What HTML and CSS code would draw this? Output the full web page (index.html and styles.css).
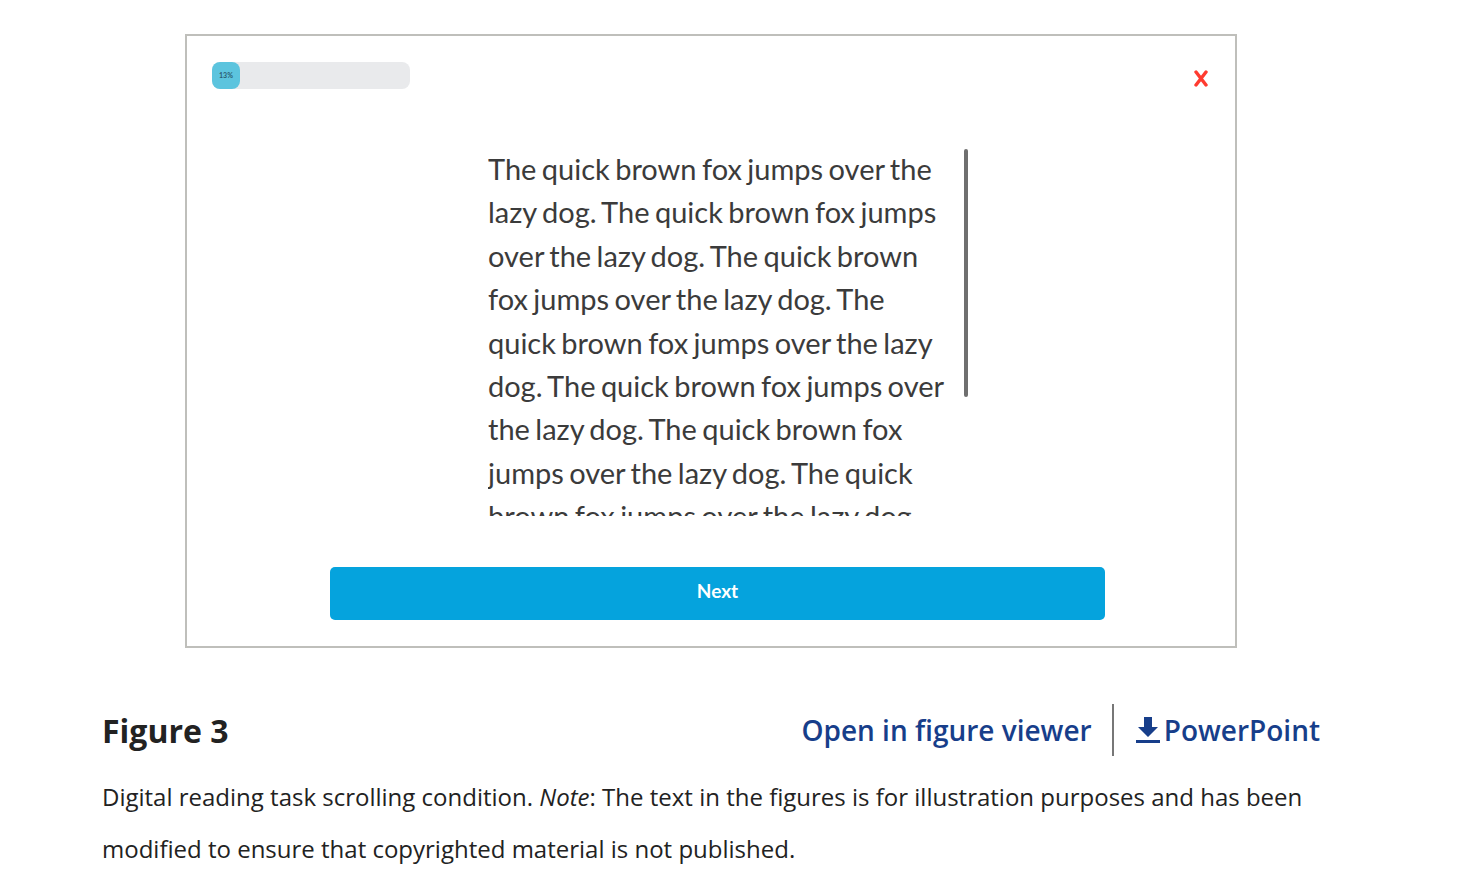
FILE: index.html
```html
<!DOCTYPE html>
<html lang="en">
  <head>
    <meta charset="UTF-8" />
    <meta name="viewport" content="width=device-width, initial-scale=1.0" />
    <link rel="stylesheet" href="styles.css">
    <title>Figure 3</title>
  </head>
  <body>
    <div class="figure-frame">
      <div class="task-header">
        <div class="progress">
          <div class="progress-fill">13%</div>
        </div>
        <svg class="close-icon" width="14" height="17" viewBox="0 0 14 17">
          <line x1="2" y1="2" x2="12" y2="15" />
          <line x1="12" y1="2" x2="2" y2="15" />
        </svg>
      </div>
      <div class="reading-area">
        <div class="reading-text">
          The quick brown fox jumps over the lazy dog. The quick brown fox jumps
          over the lazy dog. The quick brown fox jumps over the lazy dog. The
          quick brown fox jumps over the lazy dog. The quick brown fox jumps over
          the lazy dog. The quick brown fox jumps over the lazy dog. The quick
          brown fox jumps over the lazy dog. The quick brown fox jumps over the
          lazy dog.
        </div>
        <div class="scroll-thumb"></div>
      </div>
      <button class="next-btn">Next</button>
    </div>

    <div class="figure-caption">
      <div class="caption-head">
        <h2>Figure 3</h2>
        <div class="figure-links">
          <a href="#">Open in figure viewer</a>
          <span class="link-divider"></span>
          <a href="#" class="ppt-link">
            <svg width="26" height="28" viewBox="0 0 26 28">
              <path d="M9 1h8v10h6L13 21 3 11h6z" />
              <rect x="1" y="24" width="24" height="3" />
            </svg>PowerPoint</a>
        </div>
      </div>
      <p>
        Digital reading task scrolling condition. <em>Note</em>: The text in the
        figures is for illustration purposes and has been modified to ensure that
        copyrighted material is not published.
      </p>
    </div>
  </body>
</html>
```

FILE: styles.css
```css
* {
  box-sizing: border-box;
}
body {
  margin: 0;
  background: #fff;
  font-family: "Open Sans", "Liberation Sans", sans-serif;
  color: #222;
}
.figure-frame {
  display: flex;
  flex-direction: column;
  width: 1052px;
  height: 614px;
  margin: 34px 0 0 185px;
  border: 2px solid #bfbfbb;
}
.task-header {
  display: flex;
  justify-content: space-between;
  align-items: flex-start;
  padding: 26px 27px 0 25px;
}
.progress {
  width: 198px;
  height: 27px;
  border-radius: 8px;
  background: #e9eaec;
}
.progress-fill {
  width: 28px;
  height: 27px;
  border-radius: 8px;
  background: #5cc4de;
  color: #2c5c72;
  font-family: Lato, sans-serif;
  font-size: 7px;
  font-weight: 700;
  line-height: 27px;
  text-align: center;
}
.close-icon {
  margin-top: 8px;
  stroke: #ff3b30;
  stroke-width: 3.4px;
  stroke-linecap: round;
}
.reading-area {
  display: flex;
  margin: 58px 0 0 301px;
}
.reading-text {
  width: 460px;
  height: 369px;
  overflow: hidden;
  font-family: Lato, sans-serif;
  font-size: 29px;
  line-height: 43.4px;
  color: #3b3b3b;
  word-spacing: -2px;
}
.scroll-thumb {
  width: 4px;
  height: 248px;
  margin: 2px 0 0 16px;
  border-radius: 2px;
  background: #6f6f6f;
}
.next-btn {
  width: 775px;
  height: 53px;
  margin: 51px 0 0 143px;
  padding: 0 0 6px;
  border: 0;
  border-radius: 5px;
  background: #05a3dd;
  color: #fff;
  font-family: Lato, sans-serif;
  font-size: 19px;
  font-weight: 700;
  cursor: pointer;
}
.figure-caption {
  padding-left: 102px;
}
.caption-head {
  display: flex;
  justify-content: space-between;
  align-items: center;
  width: 1218px;
  margin-top: 56px;
}
.caption-head h2 {
  margin: 0;
  font-size: 32px;
  font-weight: 700;
  color: #222;
}
.figure-links {
  display: flex;
  align-items: center;
}
.figure-links a {
  color: #173e8a;
  font-size: 28px;
  font-weight: 600;
  text-decoration: none;
}
.link-divider {
  width: 2px;
  height: 52px;
  margin: 0 21px 0 20px;
  background: #777;
}
.ppt-link {
  display: flex;
  align-items: center;
}
.ppt-link svg {
  fill: #173e8a;
  margin-right: 3px;
}
.figure-caption p {
  margin: 15px 0 0;
  width: 1230px;
  font-size: 24px;
  line-height: 52px;
  color: #222;
}
```
